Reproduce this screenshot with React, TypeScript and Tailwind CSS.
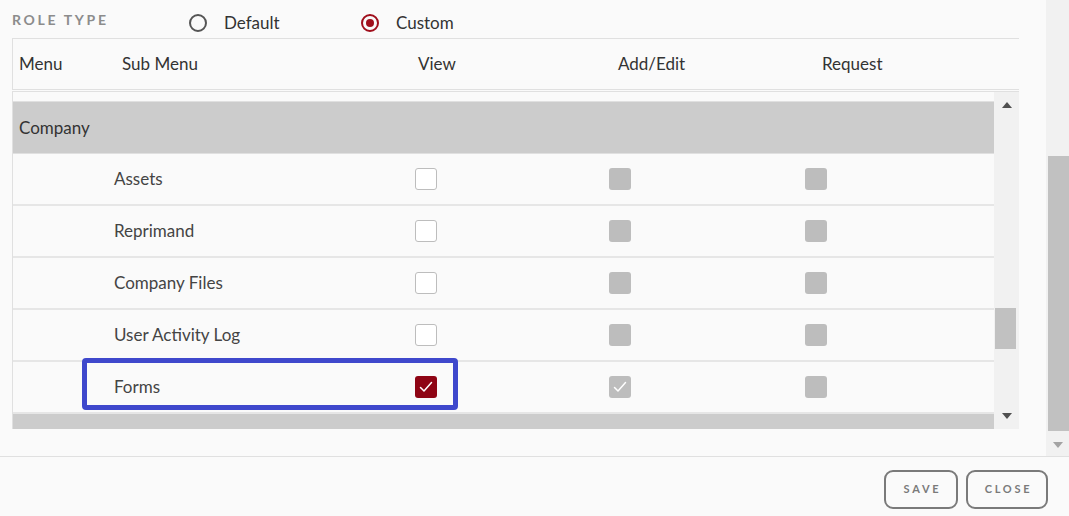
import React from "react";

type Perm = "empty" | "disabled" | "checked" | "disabledChecked";

const rows: { name: string; view: Perm; add: Perm; req: Perm }[] = [
  { name: "Assets", view: "empty", add: "disabled", req: "disabled" },
  { name: "Reprimand", view: "empty", add: "disabled", req: "disabled" },
  { name: "Company Files", view: "empty", add: "disabled", req: "disabled" },
  { name: "User Activity Log", view: "empty", add: "disabled", req: "disabled" },
  { name: "Forms", view: "checked", add: "disabledChecked", req: "disabled" },
];

const Check = () => (
  <svg width="16" height="16" viewBox="0 0 16 16" fill="none">
    <path d="M2.5 8.5 L6 12 L13.5 3.5" stroke="white" strokeWidth="1.5" strokeLinecap="round" strokeLinejoin="round" />
  </svg>
);

const Box = ({ kind }: { kind: Perm }) => {
  if (kind === "empty")
    return <div className="w-[22px] h-[22px] rounded-[3px] border border-[#bdbdbd] bg-white" />;
  if (kind === "disabled")
    return <div className="w-[22px] h-[22px] rounded-[3px] bg-[#bdbdbd]" />;
  if (kind === "checked")
    return (
      <div className="w-[22px] h-[22px] rounded-[3px] bg-[#8e0414] flex items-center justify-center">
        <Check />
      </div>
    );
  return (
    <div className="w-[22px] h-[22px] rounded-[3px] bg-[#bdbdbd] flex items-center justify-center">
      <Check />
    </div>
  );
};

const Radio = ({ on }: { on?: boolean }) =>
  on ? (
    <div className="w-[18px] h-[18px] rounded-full border-2 border-[#a00f1c] flex items-center justify-center">
      <div className="w-[8px] h-[8px] rounded-full bg-[#a00f1c]" />
    </div>
  ) : (
    <div className="w-[18px] h-[18px] rounded-full border-2 border-[#555]" />
  );

const Arrow = ({ up, color }: { up?: boolean; color: string }) => (
  <svg width="10" height="6" viewBox="0 0 10 6">
    <path d={up ? "M0 6 L5 0 L10 6 Z" : "M0 0 L5 6 L10 0 Z"} fill={color} />
  </svg>
);

export default function App() {
  return (
    <div className="w-[1069px] h-[516px] bg-[#fafafa] overflow-hidden flex flex-col text-[#333]" style={{ fontFamily: "Lato, 'Open Sans', sans-serif" }}>
      <div className="relative h-[456px] flex">
        <div className="flex-1 pl-[12px] pr-[27px]">
          {/* role type */}
          <div className="h-[38px] flex items-center">
            <div className="w-[177px] text-[14px] font-bold tracking-[0.19em] text-[#8c8c8c]">ROLE TYPE</div>
            <div className="flex items-center w-[172px] pt-[7px]">
              <Radio />
              <span className="text-[17px] ml-[17px] text-[#333]">Default</span>
            </div>
            <div className="flex items-center pt-[7px]">
              <Radio on />
              <span className="text-[17px] ml-[17px] text-[#333]">Custom</span>
            </div>
          </div>

          {/* header */}
          <div className="h-[52px] border-t border-b border-l border-[#e0e0e0] flex items-center pl-[6px] text-[17px] text-[#333]">
            <div className="w-[103px]">Menu</div>
            <div className="w-[296px]">Sub Menu</div>
            <div className="w-[200px]">View</div>
            <div className="w-[204px]">Add/Edit</div>
            <div>Request</div>
          </div>

          {/* body */}
          <div className="h-[338px] mt-[1px] border-t border-l border-[#e0e0e0] flex overflow-hidden">
            <div className="flex-1 overflow-hidden">
              <div className="h-[10px] border-b border-[#e0e0e0] bg-[#fafafa]" />
              <div className="h-[52px] bg-[#cccccc] border-b border-[#e0e0e0] flex items-center pl-[6px] text-[17px] text-[#333]">
                Company
              </div>
              {rows.map((r) => (
                <div key={r.name} className="h-[52px] border-b-2 border-[#e6e6e6] flex items-center text-[17px] text-[#444]">
                  <div className="w-[101px]" />
                  <div className="w-[301px]">{r.name}</div>
                  <div className="w-[194px]"><Box kind={r.view} /></div>
                  <div className="w-[196px]"><Box kind={r.add} /></div>
                  <div><Box kind={r.req} /></div>
                </div>
              ))}
              <div className="h-[52px] bg-[#cccccc]" />
            </div>
            <div className="w-[25px] bg-[#f1f1f1] flex flex-col items-center">
              <div className="h-[24px] flex items-center justify-center pt-[1px]">
                <Arrow up color="#505050" />
              </div>
              <div className="h-[192px]" />
              <div className="w-[21px] h-[41px] bg-[#c1c1c1] -ml-[2px]" />
              <div className="flex-1" />
              <div className="h-[26px] flex items-center justify-center">
                <Arrow color="#505050" />
              </div>
            </div>
          </div>
        </div>

        {/* outer scrollbar */}
        <div className="w-[23px] bg-[#f1f1f1] flex flex-col">
          <div className="h-[156px]" />
          <div className="h-[275px] ml-[2px] bg-[#c1c1c1]" />
          <div className="flex-1 flex items-center justify-center pt-[3px]">
            <Arrow color="#a3a3a3" />
          </div>
        </div>

        {/* highlight */}
        <div className="absolute left-[82px] top-[358px] w-[376px] h-[52px] border-[5px] border-[#3f48cc] rounded-[4px]" />
      </div>

      {/* footer */}
      <div className="flex-1 border-t border-[#e0e0e0] flex items-start justify-end gap-[8px] pt-[13px] pr-[21px]">
        <button className="w-[74px] h-[39px] rounded-[9px] border-2 border-[#7a7a7a] text-[11px] font-bold tracking-[0.25em] text-[#7a7a7a] pl-[3px]">SAVE</button>
        <button className="w-[82px] h-[39px] rounded-[9px] border-2 border-[#7a7a7a] text-[11px] font-bold tracking-[0.25em] text-[#7a7a7a] pl-[3px]">CLOSE</button>
      </div>
    </div>
  );
}
